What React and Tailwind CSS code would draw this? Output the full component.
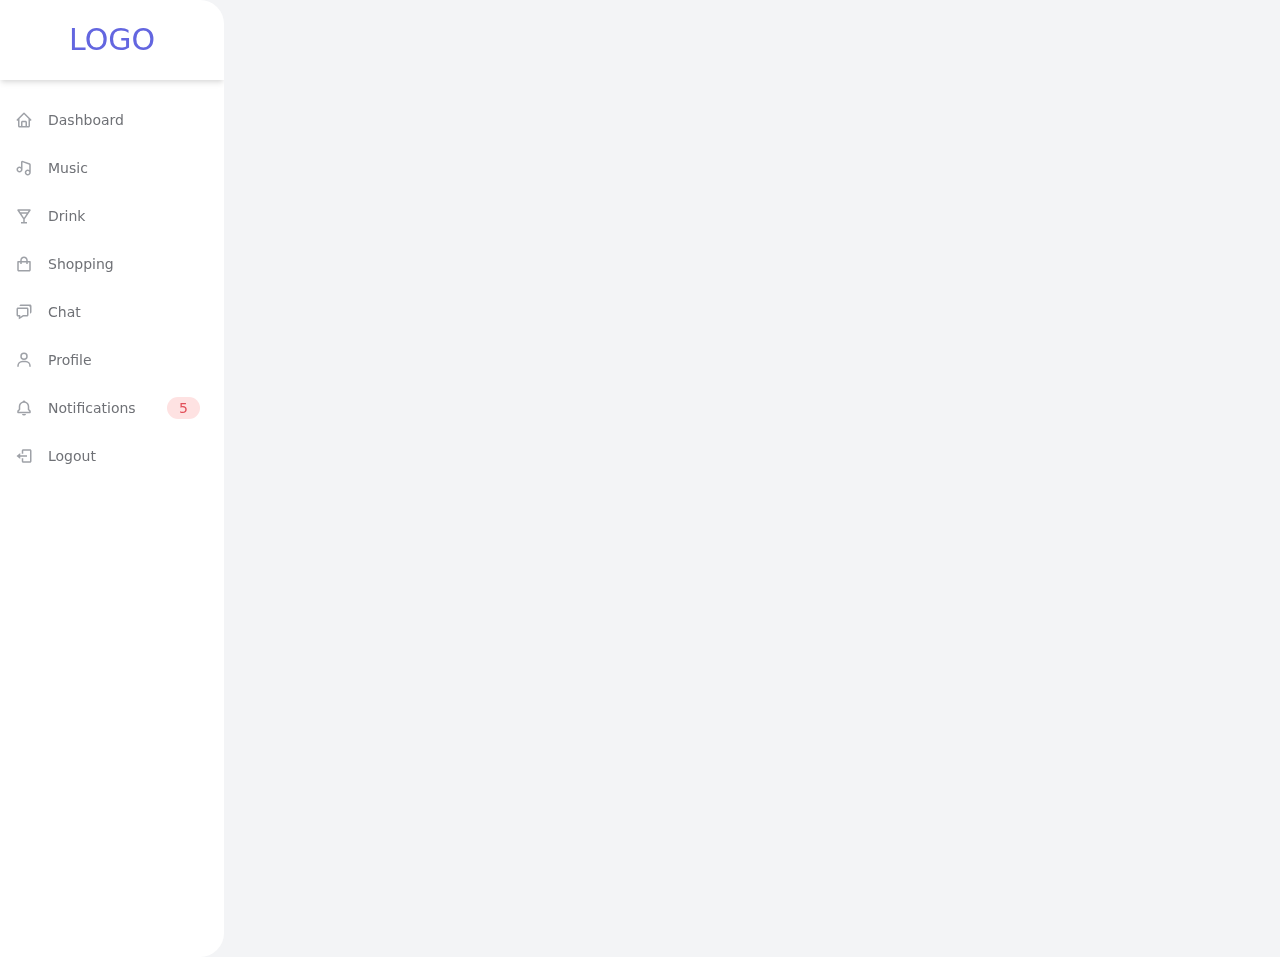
import React from "react";
import { BiHome, BiMusic, BiDrink, BiShoppingBag, BiChat, BiUser, BiBell, BiLogOut } from "react-icons/bi";

const items = [
  { label: "Dashboard", Icon: BiHome },
  { label: "Music", Icon: BiMusic },
  { label: "Drink", Icon: BiDrink },
  { label: "Shopping", Icon: BiShoppingBag },
  { label: "Chat", Icon: BiChat },
  { label: "Profile", Icon: BiUser },
  { label: "Notifications", Icon: BiBell, badge: "5" },
  { label: "Logout", Icon: BiLogOut },
];

export default function App() {
  return (
    <div className="min-h-screen flex bg-[#f3f4f6] font-['DejaVu_Sans',sans-serif]">
      <div className="flex flex-col w-56 bg-white rounded-r-3xl overflow-hidden">
        <div className="flex items-center justify-center h-20 shadow-[0_4px_6px_-1px_rgba(0,0,0,0.1),0_2px_4px_-1px_rgba(0,0,0,0.06)]">
          <h1 className="text-3xl uppercase text-[#6366e0] will-change-transform">Logo</h1>
        </div>
        <ul className="flex flex-col py-4">
          {items.map(({ label, Icon, badge }) => (
            <li key={label}>
              <a href="#" className="flex flex-row items-center h-12 text-[#6f7176] will-change-transform">
                <span className="inline-flex items-center justify-center h-12 w-12 text-[#9ea1a7]">
                  <Icon className="w-[18px] h-[18px]" />
                </span>
                <span className="text-sm font-medium">{label}</span>
                {badge && (
                  <span className="ml-auto mr-6 text-sm bg-[#fee2e2] rounded-full px-3 py-px text-[#e2505a]">{badge}</span>
                )}
              </a>
            </li>
          ))}
        </ul>
      </div>
    </div>
  );
}
